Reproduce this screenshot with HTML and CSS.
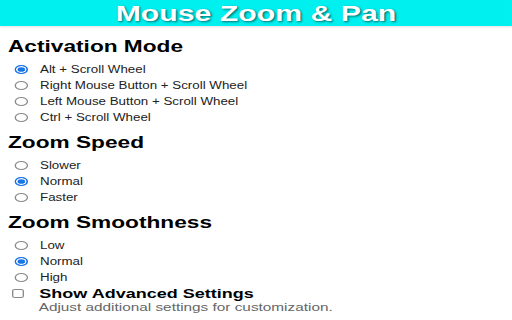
FILE: index.html
```html
<!DOCTYPE html>
<html>
<head>
<meta charset="utf-8">
<link rel="stylesheet" href="styles.css">
</head>
<body>
<div class="page">
  <header class="topbar"><h1 class="title">Mouse Zoom &amp; Pan</h1></header>
  <section class="group first">
    <h2 class="group-title">Activation Mode</h2>
    <div class="option"><span class="radio on"></span><span>Alt + Scroll Wheel</span></div>
    <div class="option"><span class="radio"></span><span>Right Mouse Button + Scroll Wheel</span></div>
    <div class="option"><span class="radio"></span><span>Left Mouse Button + Scroll Wheel</span></div>
    <div class="option"><span class="radio"></span><span>Ctrl + Scroll Wheel</span></div>
  </section>
  <section class="group">
    <h2 class="group-title">Zoom Speed</h2>
    <div class="option"><span class="radio"></span><span>Slower</span></div>
    <div class="option"><span class="radio on"></span><span>Normal</span></div>
    <div class="option"><span class="radio"></span><span>Faster</span></div>
  </section>
  <section class="group">
    <h2 class="group-title">Zoom Smoothness</h2>
    <div class="option"><span class="radio"></span><span>Low</span></div>
    <div class="option"><span class="radio on"></span><span>Normal</span></div>
    <div class="option"><span class="radio"></span><span>High</span></div>
    <div class="option check-row"><span class="checkbox"></span><span class="check-label">Show Advanced Settings</span></div>
    <p class="hint">Adjust additional settings for customization.</p>
  </section>
</div>
</body>
</html>
```
FILE: styles.css
```css
html, body {
  margin: 0;
  padding: 0;
  background: #fff;
  overflow: hidden;
}
.page {
  width: 384px;
  height: 320px;
  transform: scaleX(1.3333);
  transform-origin: 0 0;
  font-family: "Liberation Sans", Arial, sans-serif;
  color: #222;
}
.topbar {
  height: 26px;
  background: #00f0f0;
  box-shadow: 0 1px 2px rgba(0, 0, 0, 0.12);
  display: flex;
  justify-content: center;
  align-items: center;
}
.title {
  margin: 0;
  font-size: 22.7px;
  line-height: 26px;
  font-weight: bold;
  color: #fff;
  text-shadow: 1px 1px 2px rgba(0, 0, 0, 0.55);
}
.group {
  margin-top: 8px;
}
.group.first {
  margin-top: 11px;
}
.group-title {
  margin: 0 0 4px 6px;
  font-size: 17px;
  line-height: 20px;
  font-weight: bold;
  color: #000;
}
.option {
  display: flex;
  align-items: center;
  height: 16px;
  padding-left: 10.5px;
  gap: 9px;
  font-size: 10px;
}
.radio {
  box-sizing: border-box;
  width: 10.5px;
  height: 9px;
  border: 1px solid #8a8a8a;
  border-radius: 50%;
  background: #fff;
}
.radio.on {
  border-color: #1a73e8;
  background: #1a73e8;
  box-shadow: inset 0 0 0 1.2px #fff;
}
.check-row {
  padding-left: 9px;
  gap: 12px;
}
.checkbox {
  box-sizing: border-box;
  width: 8.5px;
  height: 9px;
  border: 1px solid #8a8a8a;
  border-radius: 2px;
  background: #fff;
}
.check-label {
  font-size: 13.5px;
  font-weight: bold;
  color: #000;
}
.hint {
  margin: -1px 0 0 29px;
  font-size: 11.5px;
  line-height: 14px;
  color: #666;
}
```
